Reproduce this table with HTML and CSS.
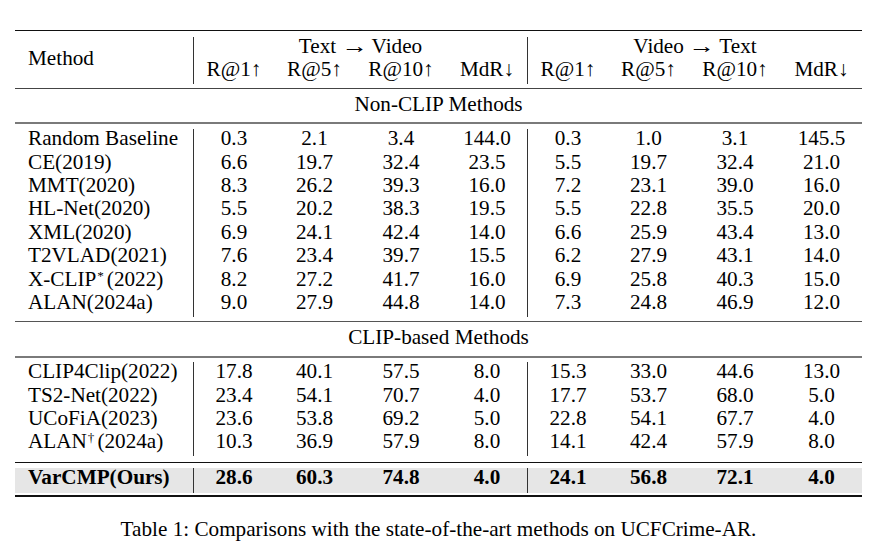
FILE: index.html
```html
<!DOCTYPE html>
<html lang="en">
<head>
<meta charset="utf-8">
<title>Table 1</title>
<link rel="stylesheet" href="styles.css">
</head>
<body>
<div class="page">
  <div class="tbl">
    <div class="sec head grid">
      <div class="cell method">Method</div>
      <div class="cell span4 vl">Text <span class="arrow">→</span> Video</div>
      <div class="cell span4 vl">Video <span class="arrow">→</span> Text</div>
      <div class="cell vl">R@1↑</div><div class="cell">R@5↑</div><div class="cell">R@10↑</div><div class="cell">MdR↓</div>
      <div class="cell vl">R@1↑</div><div class="cell">R@5↑</div><div class="cell">R@10↑</div><div class="cell">MdR↓</div>
    </div>
    <div class="sec group grp1"><div class="cell">Non-CLIP Methods</div></div>
    <div class="sec block blk1">
      <div class="grid row"><div class="cell name">Random Baseline</div><div class="cell vl">0.3</div><div class="cell">2.1</div><div class="cell">3.4</div><div class="cell">144.0</div><div class="cell vl">0.3</div><div class="cell">1.0</div><div class="cell">3.1</div><div class="cell">145.5</div></div>
      <div class="grid row"><div class="cell name">CE(2019)</div><div class="cell vl">6.6</div><div class="cell">19.7</div><div class="cell">32.4</div><div class="cell">23.5</div><div class="cell vl">5.5</div><div class="cell">19.7</div><div class="cell">32.4</div><div class="cell">21.0</div></div>
      <div class="grid row"><div class="cell name">MMT(2020)</div><div class="cell vl">8.3</div><div class="cell">26.2</div><div class="cell">39.3</div><div class="cell">16.0</div><div class="cell vl">7.2</div><div class="cell">23.1</div><div class="cell">39.0</div><div class="cell">16.0</div></div>
      <div class="grid row"><div class="cell name">HL-Net(2020)</div><div class="cell vl">5.5</div><div class="cell">20.2</div><div class="cell">38.3</div><div class="cell">19.5</div><div class="cell vl">5.5</div><div class="cell">22.8</div><div class="cell">35.5</div><div class="cell">20.0</div></div>
      <div class="grid row"><div class="cell name">XML(2020)</div><div class="cell vl">6.9</div><div class="cell">24.1</div><div class="cell">42.4</div><div class="cell">14.0</div><div class="cell vl">6.6</div><div class="cell">25.9</div><div class="cell">43.4</div><div class="cell">13.0</div></div>
      <div class="grid row"><div class="cell name">T2VLAD(2021)</div><div class="cell vl">7.6</div><div class="cell">23.4</div><div class="cell">39.7</div><div class="cell">15.5</div><div class="cell vl">6.2</div><div class="cell">27.9</div><div class="cell">43.1</div><div class="cell">14.0</div></div>
      <div class="grid row"><div class="cell name">X-CLIP<sup>*</sup>(2022)</div><div class="cell vl">8.2</div><div class="cell">27.2</div><div class="cell">41.7</div><div class="cell">16.0</div><div class="cell vl">6.9</div><div class="cell">25.8</div><div class="cell">40.3</div><div class="cell">15.0</div></div>
      <div class="grid row"><div class="cell name">ALAN(2024a)</div><div class="cell vl">9.0</div><div class="cell">27.9</div><div class="cell">44.8</div><div class="cell">14.0</div><div class="cell vl">7.3</div><div class="cell">24.8</div><div class="cell">46.9</div><div class="cell">12.0</div></div>
    </div>
    <div class="sec group grp2"><div class="cell">CLIP-based Methods</div></div>
    <div class="sec block blk2">
      <div class="grid row"><div class="cell name">CLIP4Clip(2022)</div><div class="cell vl">17.8</div><div class="cell">40.1</div><div class="cell">57.5</div><div class="cell">8.0</div><div class="cell vl">15.3</div><div class="cell">33.0</div><div class="cell">44.6</div><div class="cell">13.0</div></div>
      <div class="grid row"><div class="cell name">TS2-Net(2022)</div><div class="cell vl">23.4</div><div class="cell">54.1</div><div class="cell">70.7</div><div class="cell">4.0</div><div class="cell vl">17.7</div><div class="cell">53.7</div><div class="cell">68.0</div><div class="cell">5.0</div></div>
      <div class="grid row"><div class="cell name">UCoFiA(2023)</div><div class="cell vl">23.6</div><div class="cell">53.8</div><div class="cell">69.2</div><div class="cell">5.0</div><div class="cell vl">22.8</div><div class="cell">54.1</div><div class="cell">67.7</div><div class="cell">4.0</div></div>
      <div class="grid row"><div class="cell name">ALAN<sup>†</sup>(2024a)</div><div class="cell vl">10.3</div><div class="cell">36.9</div><div class="cell">57.9</div><div class="cell">8.0</div><div class="cell vl">14.1</div><div class="cell">42.4</div><div class="cell">57.9</div><div class="cell">8.0</div></div>
    </div>
    <div class="sec block ours">
      <div class="grid row best"><div class="cell name">VarCMP(Ours)</div><div class="cell vl">28.6</div><div class="cell">60.3</div><div class="cell">74.8</div><div class="cell">4.0</div><div class="cell vl">24.1</div><div class="cell">56.8</div><div class="cell">72.1</div><div class="cell">4.0</div></div>
    </div>
  </div>
  <p class="caption">Table 1: Comparisons with the state-of-the-art methods on UCFCrime-AR.</p>
</div>
</body>
</html>
```
FILE: styles.css
```css
* { box-sizing: border-box; }
html, body { margin: 0; padding: 0; background: #fff; }
body {
  font-family: "Liberation Serif", "Times New Roman", serif;
  font-size: 21.2px;
  color: #000;
}
.page {
  width: 882px;
  height: 559px;
  padding: 30px 0 0 15px;
}
.tbl { width: 847px; }
.grid {
  display: grid;
  grid-template-columns: 178px 81px 81px 92px 80px 81px 81px 92px 81px;
}
.cell {
  line-height: 19.43px;
  padding-bottom: 4px;
  text-align: center;
  white-space: nowrap;
}
.vl { border-left: 1px solid #333; }
.name { text-align: left; padding-left: 13px; }
sup {
  display: inline-block;
  font-size: 0.62em;
  line-height: 1;
  vertical-align: top;
  margin: -1px 3px 0 1px;
}
.arrow {
  display: inline-block;
  transform: scaleX(1.25);
  margin: 0 2px;
}

.head {
  border-top: 1px solid #111;
  border-bottom: 1px solid #444;
  padding: 6px 0 4.4px;
}
.head .method {
  grid-row: 1 / span 2;
  align-self: center;
  text-align: left;
  padding-left: 13px;
}
.head .span4 { grid-column: span 4; }

.group { text-align: center; }
.grp1 { padding: 5.5px 0 3.5px; border-bottom: 2px solid #7a7a7a; }
.blk1 { padding: 5.4px 0 4.7px; border-bottom: 1px solid #555; }
.grp2 { padding: 5.5px 0 4.5px; border-bottom: 2px solid #7a7a7a; }
.blk2 { padding: 4.4px 0 6.4px; border-bottom: 1px solid #111; }
.ours { padding: 4.8px 0 2px; border-bottom: 2px solid #111; }
.best { background: #e6e6e6; font-weight: bold; }
.best .cell { padding-top: 0.2px; padding-bottom: 5.4px; }

.caption {
  margin: 20.8px 0 0;
  width: 847px;
  text-align: center;
  line-height: 23.4px;
}
```
